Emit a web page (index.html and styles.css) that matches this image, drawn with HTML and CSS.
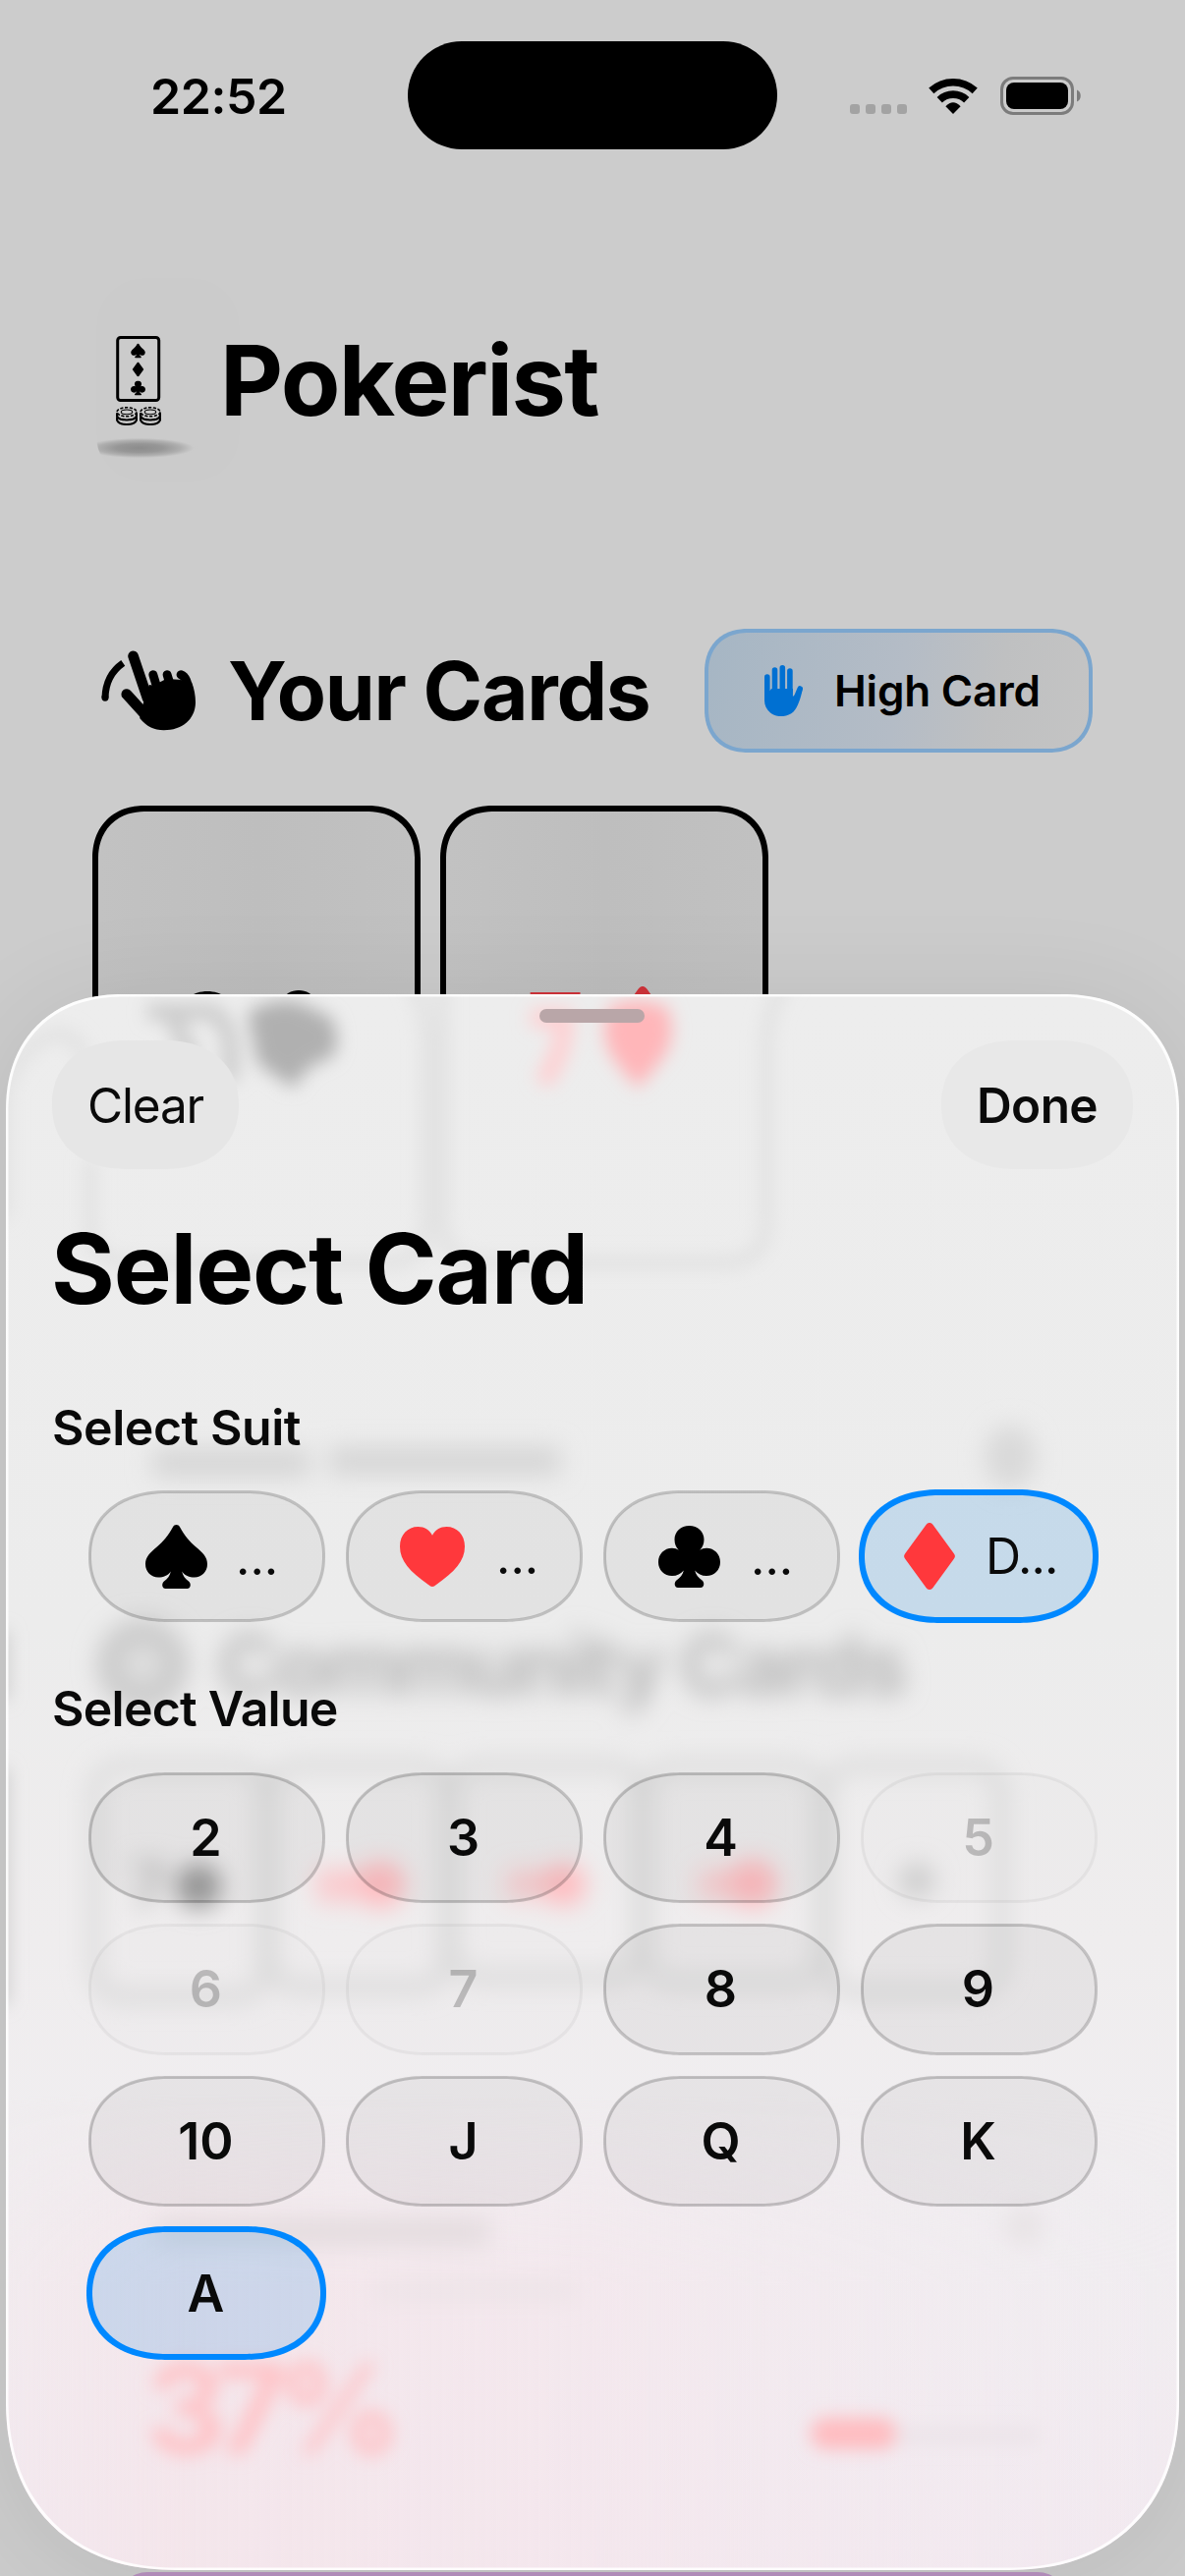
FILE: index.html
```html
<!DOCTYPE html>
<html lang="en">
<head>
<meta charset="utf-8">
<title>Pokerist</title>
<link rel="stylesheet" href="styles.css">
</head>
<body>
<svg width="0" height="0" class="defs" aria-hidden="true">
  <symbol id="spade" viewBox="0 0 63 65"><path d="M31.500 0C33 0 34.200 .8 35 2.300C40 11.500 45 17 51 22.300C58.500 28.500 63 33 63 40C63 48 57 53.500 50 53.500C44.500 53.500 40 51.500 37.200 47.500C38 52 40.500 55 44 57.500C47 60 46 65 42.500 65H20.500C17 65 16 60 19 57.500C22.500 55 25 52 25.800 47.500C23 51.500 18.500 53.500 13 53.500C6 53.500 0 48 0 40C0 33 4.500 28.500 12 22.300C18 17 23 11.500 28 2.300C28.800 .8 30 0 31.500 0Z"/></symbol>
  <symbol id="heart" viewBox="0 0 66 61"><path d="M33 61C31.500 61 30.500 60 29 59C10 45.500 0 35 0 20C0 8 8 0 18.500 0C25 0 30 3 33 8.700C36 3 41 0 47.500 0C58 0 66 8 66 20C66 35 56 45.500 37 59C35.500 60 34.500 61 33 61Z"/></symbol>
  <symbol id="club" viewBox="0 0 63 63"><path d="M31.500 0C40 0 46.500 6 46.500 14C46.500 18.500 45 22 42.300 24.800C44 23.500 46.500 22.800 49 22.800C57 22.800 63 29 63 37C63 45 57 51 49 51C44 51 40 49 37.200 45.500C38 50 41 53 44.500 55.500C47.500 58 46.500 63 43 63H20C16.500 63 15.500 58 18.500 55.500C22 53 25 50 25.800 45.500C23 49 19 51 14 51C6 51 0 45 0 37C0 29 6 22.800 14 22.800C16.500 22.800 19 23.500 20.700 24.800C18 22 16.500 18.500 16.500 14C16.500 6 23 0 31.500 0Z"/></symbol>
  <symbol id="diamond" viewBox="0 0 52 68"><path d="M22.500 2C24.500 -.7 27.500 -.7 29.500 2L50.800 31.300C52.300 33.300 52.300 34.700 50.800 36.700L29.500 66C27.500 68.700 24.500 68.700 22.500 66L1.200 36.700C-.3 34.700 -.3 33.300 1.200 31.300Z"/></symbol>
  <symbol id="chips" viewBox="0 0 21 18">
    <ellipse cx="10.500" cy="5" rx="9.500" ry="4.300" fill="none" stroke="#000" stroke-width="1.500" stroke-dasharray="3 1.500"/>
    <ellipse cx="10.500" cy="5" rx="5.500" ry="2.300" fill="none" stroke="#000" stroke-width="1"/>
    <path d="M1 6V9C3 14 18 14 20 9V6M1 10V13C3 18.500 18 18.500 20 13V10" fill="none" stroke="#000" stroke-width="2"/>
    <path d="M5.500 9.500V11M15.500 9.500V11M8 14V15M13 14V15" stroke="#ccc" stroke-width="1.600"/>
  </symbol>
</svg>

<main class="page">
  <header class="status">
    <span class="time">22:52</span>
    <span class="island"></span>
    <span class="signals">
      <span class="dots"><i></i><i></i><i></i><i></i></span>
      <svg class="wifi" viewBox="286 57 151 111"><g fill="none" stroke="#000" stroke-width="23"><path d="M294.500 97A99 99 0 0 1 428.500 97"/><path d="M320 125A60 60 0 0 1 403 125"/></g><path d="M361.500 168L338.500 145Q361.500 121 384.500 145Z"/></svg>
      <svg class="battery" viewBox="0 0 83 39"><rect x="1.500" y="1.500" width="72" height="36" rx="11.500" fill="none" stroke="#7c7c7c" stroke-width="3"/><rect x="6" y="6" width="63" height="27" rx="8"/><path d="M78 13.500C83 15 83 24 78 25.500Z" fill="#7c7c7c"/></svg>
    </span>
  </header>

  <section class="brand">
    <span class="logo">
      <svg class="card-logo" viewBox="0 0 46 92"><rect x="1.700" y="1.500" width="42" height="64" rx="3" fill="none" stroke="#000" stroke-width="3"/>
        <use href="#spade" x="15" y="7.500" width="15" height="15"/><use href="#diamond" x="16" y="26.500" width="13" height="15"/><use href="#club" x="15" y="45.500" width="15" height="15"/>
        <use href="#chips" x="0" y="72" width="22" height="19"/><use href="#chips" x="24" y="72" width="22" height="19"/></svg>
    </span>
    <h1>Pokerist</h1>
  </section>

  <section class="hand-head">
    <svg class="swipe" viewBox="0 0 289 246"><g transform="translate(-23 -33)" stroke="#000" stroke-linecap="round" fill="none">
      <path d="M35 178C36 132 54 96 90 71" stroke-width="21" stroke-linecap="butt"/><path d="M35 176V178" stroke-width="21"/>
      <path d="M121 50L165 180" stroke-width="32"/><path d="M101 167L170 243" stroke-width="33"/>
      <path d="M182 107L195 150" stroke-width="27"/><path d="M225 107L238 150" stroke-width="27"/><path d="M267 107C283 113 287 130 292 160" stroke-width="27"/>
      <path d="M153 190L170 138L183 140L222 120L261 122L300 130C308 150 312 172 312 192C311 245 270 277 215 277C185 277 160 264 141 240Z" fill="#000" stroke="none"/></g></svg>
    <h2>Your Cards</h2>
    <span class="badge">
      <svg class="palm" viewBox="0 0 39 52"><g stroke="#0070d2" stroke-width="5.600" stroke-linecap="round" fill="none"><path d="M2.800 12V34M10.500 5V32M18.300 2.800V32M25.900 6V32"/><path d="M36.200 24L29.500 40"/></g><path d="M0 26H5.600L7 24H29L28.700 32L38.700 25C37 33 34 43 29.500 47.500C23 53.500 11.500 53.500 6 48.500C2 45 0 41 0 36Z" fill="#0070d2"/></svg>
      <span>High Card</span>
    </span>
  </section>

  <section class="hand">
    <div class="card"><b>8</b><svg><use href="#club"/></svg></div>
    <div class="card red"><b>7</b><svg><use href="#diamond"/></svg></div>
  </section>
</main>
<div class="next-panel"></div>

<section class="sheet">
  <svg class="backdrop" viewBox="6 1012 1194 1604" aria-hidden="true">
    <defs>
      <filter id="soft" x="-20%" y="-20%" width="140%" height="140%"><feGaussianBlur stdDeviation="9"/></filter>
      <filter id="softer" x="-20%" y="-20%" width="140%" height="140%"><feGaussianBlur stdDeviation="12"/></filter>
      <linearGradient id="blush" x1="0" y1="0" x2="1" y2="0"><stop offset="0" stop-color="#f4e5ea" stop-opacity=".3"/><stop offset=".15" stop-color="#f4e5ea" stop-opacity=".85"/><stop offset=".5" stop-color="#f4e6ec" stop-opacity=".7"/><stop offset="1" stop-color="#f1ecf1" stop-opacity=".1"/></linearGradient>
      <linearGradient id="fade" x1="0" y1="0" x2="0" y2="1"><stop offset="0" stop-color="#000"/><stop offset=".4" stop-color="#fff"/></linearGradient>
      <mask id="rise"><rect x="6" y="2130" width="1194" height="490" fill="url(#fade)"/></mask>
    </defs>
    <rect x="6" y="2130" width="1194" height="490" fill="url(#blush)" mask="url(#rise)"/>
    <g filter="url(#soft)">
      <g fill="none" stroke="#e0e0e0" stroke-width="12">
        <path d="M92 1180V1250Q94 1285 130 1285H395Q435 1285 435 1240V1060Q433 1020 415 990M450 1000V1240Q450 1285 490 1285H740Q780 1285 780 1240V1060Q782 1020 806 990"/>
        <path d="M4 1240V1110Q24 1056 62 1052Q88 1056 92 1110"/>
        <path d="M2 1660V1730M2 1800V2040" stroke="#c8c8c8"/>
      </g>
      <path d="M252 1030Q285 1012 308 1022L338 1036Q350 1070 334 1078Q312 1082 299 1108L262 1082Z" fill="#b0b0b0"/>
      <path d="M150 1030H215Q240 1040 234 1100M178 1030Q180 1060 200 1075" fill="none" stroke="#cbcbcb" stroke-width="16"/>
      <path d="M540 1036H574Q576 1070 552 1102" fill="none" stroke="#ffcfd1" stroke-width="18"/>
      <path d="M620 1026Q648 1012 680 1026Q690 1060 672 1080L649 1108L626 1080Q608 1055 620 1026Z" fill="#ffb6b9"/>
    </g>
    <g filter="url(#softer)">
      <g fill="none" stroke="#dadada" stroke-width="13">
        <rect x="96" y="1797" width="173" height="235" rx="28"/><rect x="275" y="1797" width="179" height="225" rx="28"/><rect x="460" y="1797" width="191" height="215" rx="28"/><rect x="657" y="1797" width="178" height="220" rx="28"/><rect x="842" y="1797" width="177" height="230" rx="28"/>
      </g>
      <rect x="155" y="1475" width="160" height="28" fill="#d5d5d5"/><rect x="335" y="1473" width="235" height="28" fill="#d5d5d5"/>
      <ellipse cx="1028" cy="1483" rx="26" ry="32" fill="#d9d9d9"/>
      <circle cx="145" cy="1694" r="34" fill="#dedede" stroke="#c9c9c9" stroke-width="24"/>
      <text x="222" y="1725" class="g" font-size="84" textLength="702" fill="#b9b9b9">Community Cards</text>
      <text x="132" y="1942" class="g" font-size="66" fill="#bcbcbc">7</text><circle cx="202" cy="1920" r="23" fill="#9a9a9a"/>
      <g fill="#ffbcc0"><rect x="322" y="1902" width="44" height="34" opacity=".7"/><circle cx="388" cy="1918" r="24"/><rect x="515" y="1902" width="40" height="32" opacity=".6"/><circle cx="574" cy="1918" r="22"/><rect x="710" y="1902" width="36" height="32" opacity=".6"/><circle cx="766" cy="1917" r="25"/></g>
      <circle cx="933" cy="1914" r="18" fill="#cfcfcf"/>
      <rect x="158" y="2259" width="340" height="26" fill="#e3dbde"/><rect x="380" y="2324" width="205" height="16" fill="#ebe3e6"/><circle cx="1042" cy="2266" r="20" fill="#e8e3e5"/>
    </g>
    <g filter="url(#soft)">
      <rect x="825" y="2461" width="88" height="32" rx="15" fill="#ffbcc0"/><rect x="912" y="2470" width="145" height="18" fill="#ece4e9"/>
      <text x="148" y="2498" class="g" font-size="128" textLength="262" fill="#ffc2c6">37%</text>
    </g>
  </svg>
  <span class="grabber"></span>
  <header class="bar"><button>Clear</button><button class="strong">Done</button></header>
  <h1>Select Card</h1>
  <h3>Select Suit</h3>
  <div class="grid suits">
    <div class="pill"><svg class="spade"><use href="#spade"/></svg><span class="low">...</span></div>
    <div class="pill"><svg class="heart"><use href="#heart"/></svg><span>...</span></div>
    <div class="pill"><svg class="club"><use href="#club"/></svg><span class="low">...</span></div>
    <div class="pill on"><svg class="diamond"><use href="#diamond"/></svg><span>D...</span></div>
  </div>
  <h3 class="second">Select Value</h3>
  <div class="grid values">
    <div class="pill">2</div><div class="pill">3</div><div class="pill">4</div><div class="pill off">5</div>
    <div class="pill off">6</div><div class="pill off">7</div><div class="pill">8</div><div class="pill">9</div>
    <div class="pill">10</div><div class="pill">J</div><div class="pill">Q</div><div class="pill">K</div>
    <div class="pill on">A</div>
  </div>
</section>
</body>
</html>
```
FILE: styles.css
```css
* { box-sizing: border-box; }
body {
  margin: 0;
  width: 1206px;
  height: 2622px;
  position: relative;
  overflow: hidden;
  background: #ccc;
  color: #000;
  font-family: Inter, "Liberation Sans", sans-serif;
}
h1, h2, h3 { margin: 0; font-weight: 700; white-space: nowrap; }
svg { display: block; flex: none; }
.defs { position: absolute; }

/* status bar */
.status {
  display: grid;
  grid-template-columns: 415px 376px 415px;
  height: 160px;
  padding-top: 42px;
}
.time { padding-left: 153px; font-size: 50px; font-weight: 600; line-height: 112px; letter-spacing: -.4px; }
.island { height: 110px; border-radius: 55px; background: #000; }
.signals { display: flex; align-items: flex-start; padding-left: 74px; }
.dots { display: flex; gap: 6px; padding-top: 64px; }
.dots i { width: 10px; height: 10px; border-radius: 3px; background: #a3a3a3; }
.wifi { width: 50px; height: 37px; margin: 37px 0 0 22px; }
.battery { width: 83px; height: 39px; margin: 36px 0 0 23px; }

/* brand */
.brand { display: flex; align-items: center; height: 208px; margin-top: 123px; padding-left: 98px; }
.logo {
  position: relative;
  width: 146px;
  height: 208px;
  margin-right: -20px;
  padding: 59px 0 0 20px;
  border-radius: 48px;
  background: rgba(0, 0, 0, .004);
  overflow: hidden;
}
.logo::after {
  content: "";
  position: absolute;
  left: -16px;
  top: 162px;
  width: 120px;
  height: 22px;
  background: radial-gradient(closest-side, #8c8c8c, #979797 40%, rgba(160, 160, 160, .65) 70%, rgba(200, 200, 200, .15) 92%, transparent);
}
.card-logo { width: 46px; height: 92px; }
.brand h1 { font-size: 99px; letter-spacing: -1.600px; }

/* your cards */
.hand-head { display: flex; align-items: center; height: 126px; margin-top: 149px; padding: 0 94px 0 103px; }
.swipe { width: 96px; height: 82px; }
.hand-head h2 { margin-left: 33px; font-size: 82px; letter-spacing: -1.300px; }
.badge {
  display: flex;
  align-items: center;
  width: 395px;
  height: 126px;
  margin-left: auto;
  padding-left: 57px;
  border: 4px solid #7ba6ce;
  border-radius: 44px;
  background: linear-gradient(100deg, #a6b6c4, #b4bcc6 50%, #bfc0c1 75%, #c4c4c4);
  font-size: 44px;
  font-weight: 600;
  letter-spacing: -.2px;
  white-space: nowrap;
}
.palm { width: 39px; height: 52px; margin-right: 32px; }
.hand { display: flex; gap: 20px; margin: 54px 0 0 94px; }
.card {
  display: flex;
  justify-content: center;
  gap: 20px;
  width: 334px;
  height: 458px;
  padding-top: 182px;
  border: 6px solid #000;
  border-radius: 54px;
  background: linear-gradient(90deg, #c2c2c2, #bebebe 50%, #c1c1c1);
}
.card b { font-size: 100px; line-height: 78px; }
.card svg { width: 80px; height: 80px; }
.card.red { color: #d0333a; }
.card.red svg { margin-top: -4px; fill: #d0333a; }
.next-panel { position: absolute; left: 120px; top: 2618px; width: 966px; height: 60px; border-radius: 40px; background: #b08bb8; }

/* sheet */
.sheet {
  position: absolute;
  left: 6px;
  top: 1012px;
  width: 1194px;
  height: 1604px;
  padding: 47px;
  border-radius: 118px 118px 172px 172px;
  overflow: hidden;
  background: linear-gradient(180deg, #ededed, #ececec 40%, #efedee 60%, #f1eef1 80%, #f3e9f0);
}
.sheet::before {
  content: "";
  position: absolute;
  z-index: 2;
  inset: 0;
  border-radius: inherit;
  box-shadow: inset 0 0 0 2.500px rgba(255, 255, 255, .85);
  pointer-events: none;
}
.page::after {
  content: "";
  position: absolute;
  left: 6px;
  top: 1012px;
  width: 1194px;
  height: 1604px;
  border-radius: 118px 118px 172px 172px;
  box-shadow: 0 10px 110px rgba(0, 0, 0, .09);
}
.backdrop { position: absolute; inset: 0; width: 1194px; height: 1604px; }
.g { font-family: Inter, sans-serif; font-weight: 700; }
.grabber { position: absolute; left: 543px; top: 15px; width: 107px; height: 14px; border-radius: 7px; background: #b9a6a8; }
.bar, .sheet h1, .sheet h3, .grid { position: relative; }
.bar { display: flex; justify-content: space-between; height: 131px; }
.bar button {
  width: 190px;
  border: 0;
  padding: 0;
  border-radius: 76px / 65px;
  background: #e6e6e6;
  color: #0a0a0a;
  font: 400 49.500px/133px Inter, sans-serif;
  letter-spacing: -1.200px;
}
.bar .strong { width: 195px; background: #e8e8e8; font-weight: 600; letter-spacing: -.6px; }
.sheet h1 { margin: 41px 0 0 -1px; font-size: 99px; line-height: 120px; letter-spacing: -1.150px; }
.sheet h3 { margin: 72px 0 0 0; color: #0a0a0a; font-size: 50px; font-weight: 600; line-height: 60px; letter-spacing: -.450px; }
.sheet h3.second { margin-top: 60px; letter-spacing: -.750px; }
.grid { display: grid; grid-template-columns: repeat(4, 238px); gap: 24px; margin-left: 38px; grid-auto-rows: 130.600px; }
.suits { margin-top: 35.500px; }
.values { margin-top: 36px; }
.pill {
  position: relative;
  display: flex;
  align-items: center;
  justify-content: center;
  padding-right: 1px;
  border-radius: 80px / 65px;
  background: rgba(0, 0, 10, .04);
  color: #0a0a0a;
  font-size: 52px;
  font-weight: 600;
}
.pill::after {
  content: "";
  position: absolute;
  inset: -1.500px;
  border: 3px solid rgba(0, 0, 0, .19);
  border-radius: 81px / 66px;
}
.pill.on { background: rgba(10, 130, 225, .17); }
.pill.on::after { inset: -3px; border: 6px solid #0088ff; border-radius: 83px / 68px; }
.pill.off { background: rgba(0, 0, 0, .008); color: rgba(10, 10, 10, .22); }
.pill.off::after { border-color: rgba(0, 0, 0, .045); }
.suits .pill { justify-content: flex-start; padding-right: 0; font-size: 50px; font-weight: 400; }
.suits span { line-height: 60px; }
.suits .low { padding-top: 2px; }
.spade { width: 63px; height: 65px; margin: 2px 29px 0 57px; }
.heart { width: 66px; height: 61px; margin: 2px 32px 0 54px; fill: #ff383c; }
.club { width: 63px; height: 63px; margin: 2px 31px 0 55px; }
.diamond { width: 52px; height: 68px; margin: 1px 31px 0 43px; fill: #ff383c; }
.suits .diamond + span { letter-spacing: -.9px; }
@supports (corner-shape: superellipse(1.2)) {
  .pill, .pill::after, .bar button, .badge, .card, .sheet, .sheet::before, .page::after { corner-shape: superellipse(1.15); }
}
```
